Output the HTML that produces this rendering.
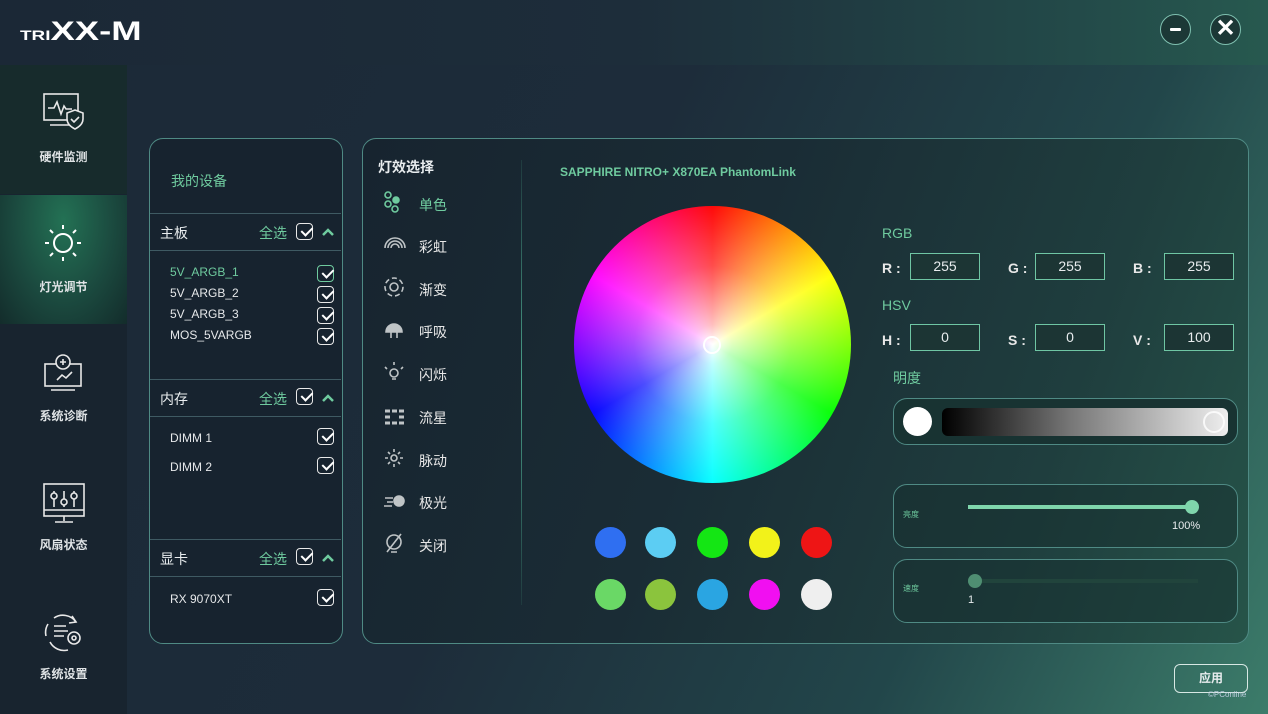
<!DOCTYPE html><html><head><meta charset="utf-8"><style>
*{margin:0;padding:0;box-sizing:border-box}
body{width:1268px;height:714px;overflow:hidden;position:relative;font-family:"Liberation Sans","Noto Sans CJK SC",sans-serif;color:#e8ecee;background:linear-gradient(115deg,#1b2937 0%,#1d2c3a 45%,#22464a 75%,#3c7c6a 100%)}
.abs{position:absolute}
.hdr{left:0;top:0;width:1268px;height:65px;background:linear-gradient(90deg,#1b2836 0%,#1d2d3a 50%,#234a49 85%,#27594f 100%)}
.side{left:0;top:65px;width:127px;height:649px;background:#18242f}
.nav{position:absolute;left:0;width:127px;height:129px;text-align:center;font-size:12px;font-weight:bold;color:#e0e4e6}
.nav span{position:absolute;left:0;width:127px;top:83px}
.panel{border:1.5px solid #4f8a84;border-radius:14px;background:#17232f}
.cb{position:absolute;width:17px;height:17px;border:1.5px solid #e8e8e8;border-radius:4px}
.cb:after{content:"";position:absolute;left:3px;top:0px;width:9px;height:5px;border-left:2px solid #fff;border-bottom:2px solid #fff;transform:rotate(-45deg) translate(-1px,3px)}
.sec{position:absolute;left:0;width:191px;height:38px;border-top:1.5px solid #3f5a63;border-bottom:1.5px solid #3f5a63;font-size:14px}
.chev{position:absolute;left:172px;top:14px}
.item{position:absolute;left:20px;font-size:12px;color:#e6e8ea}
.fx{position:absolute;left:419px;font-size:14px;color:#e8e8e8}
.inp{position:absolute;width:70px;height:27px;border:1.5px solid #6fc6a4;text-align:center;line-height:24px;font-size:14px;background:#1c3534}
.lbl{position:absolute;font-size:14px;color:#e8e8e8;font-weight:bold}
.sw{position:absolute;width:31px;height:31px;border-radius:50%}
</style></head><body>
<div class="abs hdr"></div>
<div class="abs" style="left:20px;top:18px;font-weight:900;color:#fff;letter-spacing:0px;transform:scaleX(1.35);transform-origin:left top;white-space:nowrap"><span style="font-size:14px">TRI</span><span style="font-size:27px;line-height:27px">XX-M</span></div>
<div class="abs" style="left:1160px;top:14px;width:31px;height:31px;border:1.5px solid #7fc0b0;border-radius:50%;background:#1c3836"><div class="abs" style="left:9px;top:13px;width:11px;height:3px;background:#fff;border-radius:1px"></div></div>
<div class="abs" style="left:1210px;top:14px;width:31px;height:31px;border:1.5px solid #7fc0b0;border-radius:50%;background:#1c3836;color:#fff;font-size:24px;line-height:27px;text-align:center;font-weight:bold">✕</div>
<div class="abs side"></div>
<div class="nav" style="top:65px;background:#172b2c"><svg class="abs" style="left:42px;top:27px" width="44" height="40" fill="none" stroke="#e8e8e8" stroke-width="1.6"><rect x="2" y="2" width="34" height="26"/><path d="M8 33h22M6 16h6l3-6 4 12 3-8 2 3h6"/><path d="M33 18l8 3v6c0 5-4 8-8 10c-4-2-8-5-8-10v-6z" fill="#172b2c"/><path d="M29 27l3 3 5-5"/></svg><span>硬件监测</span></div>
<div class="nav" style="top:195px;background:radial-gradient(ellipse at 50% 20%,#237154 0%,#1b4a3f 55%,#132c2b 100%)"><svg class="abs" style="left:43px;top:27px" width="40" height="40" fill="none" stroke="#fff" stroke-width="2"><circle cx="20" cy="21" r="9"/><path d="M20 3v4M20 35v4M2 21h4M34 21h4M7 8l3 3M33 8l-3 3M7 34l3-3M33 34l-3-3"/></svg><span>灯光调节</span></div>
<div class="nav" style="top:324px"><svg class="abs" style="left:43px;top:28px" width="42" height="42" fill="none" stroke="#e8e8e8" stroke-width="1.6"><rect x="2" y="12" width="36" height="22"/><circle cx="20" cy="10" r="7" fill="#18242f"/><path d="M20 7v6M17 10h6M14 28l5-5 4 3 6-6M8 38h24"/></svg><span>系统诊断</span></div>
<div class="nav" style="top:453px"><svg class="abs" style="left:43px;top:29px" width="42" height="42" fill="none" stroke="#e8e8e8" stroke-width="1.6"><rect x="1" y="2" width="40" height="32"/><path d="M1 28h40M21 34v5M12 40h18M11 9v16M21 9v16M31 9v16"/><circle cx="11" cy="14" r="3" fill="#18242f"/><circle cx="21" cy="20" r="3" fill="#18242f"/><circle cx="31" cy="14" r="3" fill="#18242f"/></svg><span>风扇状态</span></div>
<div class="nav" style="top:582px"><svg class="abs" style="left:42px;top:30px" width="44" height="42" fill="none" stroke="#e8e8e8" stroke-width="1.6"><path d="M12 6a16 16 0 0 1 22 4M8 30a16 16 0 0 0 18 8M6 12a16 16 0 0 0 -2 12"/><path d="M30 4l4 6-7 1"/><path d="M12 14h12M12 19h14M12 24h10"/><circle cx="32" cy="26" r="6"/><circle cx="32" cy="26" r="2"/></svg><span>系统设置</span></div>

<div class="abs panel" style="left:149px;top:138px;width:194px;height:506px">
<div class="abs" style="left:21px;top:32px;font-size:14px;color:#6fcb9f">我的设备</div>
<div class="sec" style="top:74px"><span class="abs" style="left:10px;top:9px">主板</span><span class="abs" style="left:109px;top:9px;color:#6fcb9f">全选</span><div class="cb" style="left:146px;top:9px"></div><svg class="chev" width="12" height="8"><path d="M1 7l5-5 5 5" fill="none" stroke="#6fcb9f" stroke-width="2.5"/></svg></div>
<div class="item" style="top:126px;color:#6fcb9f">5V_ARGB_1</div><div class="cb" style="left:167px;top:126px;border-color:#6fcb9f"></div>
<div class="item" style="top:147px">5V_ARGB_2</div><div class="cb" style="left:167px;top:147px"></div>
<div class="item" style="top:168px">5V_ARGB_3</div><div class="cb" style="left:167px;top:168px"></div>
<div class="item" style="top:189px">MOS_5VARGB</div><div class="cb" style="left:167px;top:189px"></div>
<div class="sec" style="top:240px"><span class="abs" style="left:10px;top:9px">内存</span><span class="abs" style="left:109px;top:9px;color:#6fcb9f">全选</span><div class="cb" style="left:146px;top:8px"></div><svg class="chev" width="12" height="8"><path d="M1 7l5-5 5 5" fill="none" stroke="#6fcb9f" stroke-width="2.5"/></svg></div>
<div class="item" style="top:292px">DIMM 1</div><div class="cb" style="left:167px;top:289px"></div>
<div class="item" style="top:321px">DIMM 2</div><div class="cb" style="left:167px;top:318px"></div>
<div class="sec" style="top:400px"><span class="abs" style="left:10px;top:9px">显卡</span><span class="abs" style="left:109px;top:9px;color:#6fcb9f">全选</span><div class="cb" style="left:146px;top:8px"></div><svg class="chev" width="12" height="8"><path d="M1 7l5-5 5 5" fill="none" stroke="#6fcb9f" stroke-width="2.5"/></svg></div>
<div class="item" style="top:453px">RX 9070XT</div><div class="cb" style="left:167px;top:450px"></div>
</div>

<div class="abs panel" style="left:362px;top:138px;width:887px;height:506px;background:linear-gradient(110deg,#17242f 0%,#1a2c35 40%,#1f3e3e 75%,#265449 100%)"></div>
<div class="abs" style="left:378px;top:157px;font-size:14px;font-weight:bold">灯效选择</div>
<div class="abs" style="left:521px;top:160px;width:1px;height:445px;background:linear-gradient(#1f3a3e,#4aa08a,#1f3a3e)"></div>
<svg class="abs" style="left:383px;top:190px" width="24" height="370" fill="none" stroke="#bfc4c6" stroke-width="1.6">
<g stroke="#6fcb9f"><circle cx="5" cy="5" r="3"/><circle cx="5" cy="14" r="3"/><circle cx="12" cy="19" r="3"/><circle cx="13" cy="10" r="3" fill="#6fcb9f"/></g>
<path d="M2 58a10 10 0 0 1 20 0M5 58a7 7 0 0 1 14 0M8 58a4 4 0 0 1 8 0"/>
<circle cx="11" cy="97" r="9" stroke-dasharray="5 3"/><circle cx="11" cy="97" r="4"/>
<path d="M3 142a8 8 0 0 1 16 0z M8 142v6M14 142v6" fill="#bfc4c6"/>
<circle cx="11" cy="183" r="4"/><path d="M9 189h4M11 175v-3M4 179l-2-2M18 179l2-2"/>
<path d="M2 221h5M9 221h5M16 221h5M2 227h5M16 227h5M2 233h5M9 233h5M16 233h5" stroke-width="3"/>
<circle cx="11" cy="268" r="3"/><path d="M11 259v3M11 274v3M2 268h3M17 268h3M5 262l2 2M17 262l-2 2M5 274l2-2M17 274l-2-2"/>
<circle cx="16" cy="311" r="5" fill="#bfc4c6"/><path d="M2 308h8M4 312h6M1 316h8"/>
<circle cx="11" cy="352" r="7"/><path d="M4 362l14-18M8 362h6"/>
</svg>
<div class="fx" style="top:195px;color:#6fcb9f">单色</div>
<div class="fx" style="top:237px">彩虹</div>
<div class="fx" style="top:280px">渐变</div>
<div class="fx" style="top:322px">呼吸</div>
<div class="fx" style="top:365px">闪烁</div>
<div class="fx" style="top:408px">流星</div>
<div class="fx" style="top:451px">脉动</div>
<div class="fx" style="top:493px">极光</div>
<div class="fx" style="top:536px">关闭</div>

<div class="abs" style="left:560px;top:165px;font-size:12px;font-weight:bold;color:#6fcb9f">SAPPHIRE NITRO+ X870EA PhantomLink</div>
<div class="abs" style="left:574px;top:206px;width:277px;height:277px;border-radius:50%;background:conic-gradient(#f00,#ff0,#0f0,#0ff,#00f,#f0f,#f00)"><div style="width:100%;height:100%;border-radius:50%;background:radial-gradient(circle,#fff 0%,rgba(255,255,255,.75) 10%,rgba(255,255,255,.3) 40%,rgba(255,255,255,0) 75%)"></div></div>
<div class="abs" style="left:703px;top:336px;width:18px;height:18px;border:2px solid #fff;border-radius:50%"></div>
<div class="sw" style="left:595px;top:527px;background:#2f6ff1"></div>
<div class="sw" style="left:645px;top:527px;background:#5ccdf3"></div>
<div class="sw" style="left:697px;top:527px;background:#14e614"></div>
<div class="sw" style="left:749px;top:527px;background:#f2f21a"></div>
<div class="sw" style="left:801px;top:527px;background:#ee1515"></div>
<div class="sw" style="left:595px;top:579px;background:#6ad866"></div>
<div class="sw" style="left:645px;top:579px;background:#8bc43d"></div>
<div class="sw" style="left:697px;top:579px;background:#2aa5e2"></div>
<div class="sw" style="left:749px;top:579px;background:#f10ff1"></div>
<div class="sw" style="left:801px;top:579px;background:#efefef"></div>

<div class="abs" style="left:882px;top:225px;font-size:14px;color:#6fcb9f">RGB</div>
<div class="lbl" style="left:882px;top:260px">R :</div><div class="inp" style="left:910px;top:253px">255</div>
<div class="lbl" style="left:1008px;top:260px">G :</div><div class="inp" style="left:1035px;top:253px">255</div>
<div class="lbl" style="left:1133px;top:260px">B :</div><div class="inp" style="left:1164px;top:253px">255</div>
<div class="abs" style="left:882px;top:297px;font-size:14px;color:#6fcb9f">HSV</div>
<div class="lbl" style="left:882px;top:332px">H :</div><div class="inp" style="left:910px;top:324px">0</div>
<div class="lbl" style="left:1008px;top:332px">S :</div><div class="inp" style="left:1035px;top:324px">0</div>
<div class="lbl" style="left:1133px;top:332px">V :</div><div class="inp" style="left:1164px;top:324px">100</div>
<div class="abs" style="left:893px;top:368px;font-size:14px;color:#6fcb9f">明度</div>
<div class="abs" style="left:893px;top:398px;width:345px;height:47px;border:1.5px solid #4f8a84;border-radius:14px;background:#183332"></div>
<div class="abs" style="left:903px;top:407px;width:29px;height:29px;border-radius:50%;background:#fff"></div>
<div class="abs" style="left:942px;top:408px;width:286px;height:28px;border-radius:6px;background:linear-gradient(90deg,#000,#777 45%,#eee)"></div>
<div class="abs" style="left:1203px;top:411px;width:22px;height:22px;border:2px solid #fff;border-radius:50%;opacity:.8"></div>
<div class="abs" style="left:893px;top:484px;width:345px;height:64px;border:1.5px solid #4f8a84;border-radius:14px;background:rgba(22,45,45,.5)"></div>
<div class="abs" style="left:903px;top:509px;font-size:8px;color:#6fcb9f">亮度</div>
<div class="abs" style="left:968px;top:505px;width:224px;height:4px;background:#7fd6ac"></div>
<div class="abs" style="left:1185px;top:500px;width:14px;height:14px;border-radius:50%;background:#7fd6ac"></div>
<div class="abs" style="left:1172px;top:520px;font-size:11px">100%</div>
<div class="abs" style="left:893px;top:559px;width:345px;height:64px;border:1.5px solid #4f8a84;border-radius:14px;background:rgba(22,45,45,.5)"></div>
<div class="abs" style="left:903px;top:583px;font-size:8px;color:#6fcb9f">速度</div>
<div class="abs" style="left:968px;top:579px;width:230px;height:4px;background:#21443c"></div>
<div class="abs" style="left:968px;top:574px;width:14px;height:14px;border-radius:50%;background:#4f8e72"></div>
<div class="abs" style="left:968px;top:594px;font-size:11px">1</div>
<div class="abs" style="left:1174px;top:664px;width:74px;height:29px;border:1.5px solid #d8e8e4;border-radius:6px;text-align:center;line-height:26px;font-size:12px;font-weight:bold">应用</div>
<div class="abs" style="left:1208px;top:690px;font-size:8px;color:#bcd">©PConline</div>
</body></html>
